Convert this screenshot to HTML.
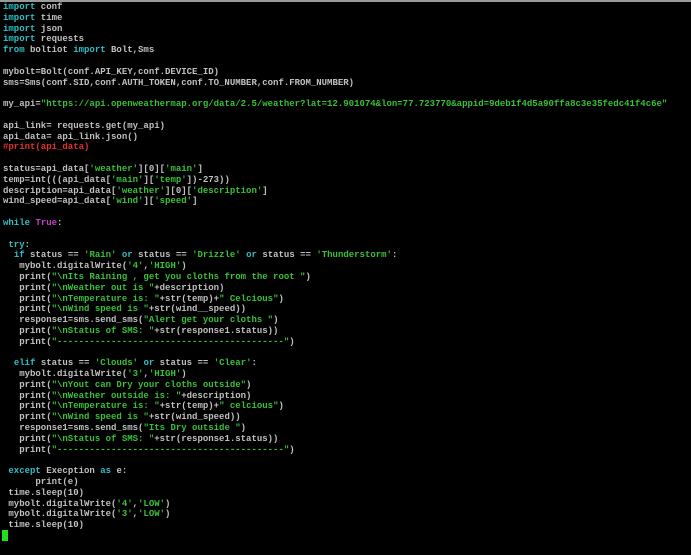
<!DOCTYPE html>
<html><head><meta charset="utf-8"><style>
html,body{margin:0;padding:0;background:#000;width:691px;height:555px;overflow:hidden}
.top{position:absolute;left:0;top:0;width:691px;height:2px;background:#9a9a9a}
pre{position:absolute;left:3px;top:2px;margin:0;font-family:"Liberation Mono",monospace;font-size:9px;line-height:10.79px;color:#c0c0c0;font-weight:bold;white-space:pre}
.k{color:#2ebfc4}.s{color:#38c038}.m{color:#c840c8}.c{color:#e03030}
.cur{position:absolute;left:2px;top:530px;width:6px;height:11px;background:#1ee01e}
</style></head><body><div class="top"></div>
<pre><span class="k">import</span> conf
<span class="k">import</span> time
<span class="k">import</span> json
<span class="k">import</span> requests
<span class="k">from</span> boltiot <span class="k">import</span> Bolt,Sms

mybolt=Bolt(conf.API_KEY,conf.DEVICE_ID)
sms=Sms(conf.SID,conf.AUTH_TOKEN,conf.TO_NUMBER,conf.FROM_NUMBER)

my_api=<span class="s">"https://api.openweathermap.org/data/2.5/weather?lat=12.901074&amp;lon=77.723770&amp;appid=9deb1f4d5a90ffa8c3e35fedc41f4c6e"</span>

api_link= requests.get(my_api)
api_data= api_link.json()
<span class="c">#print(api_data)</span>

status=api_data[<span class="s">'weather'</span>][0][<span class="s">'main'</span>]
temp=int(((api_data[<span class="s">'main'</span>][<span class="s">'temp'</span>])-273))
description=api_data[<span class="s">'weather'</span>][0][<span class="s">'description'</span>]
wind_speed=api_data[<span class="s">'wind'</span>][<span class="s">'speed'</span>]

<span class="k">while</span> <span class="m">True</span>:

 <span class="k">try</span>:
  <span class="k">if</span> status == <span class="s">'Rain'</span> <span class="k">or</span> status == <span class="s">'Drizzle'</span> <span class="k">or</span> status == <span class="s">'Thunderstorm'</span>:
   mybolt.digitalWrite(<span class="s">'4'</span>,<span class="s">'HIGH'</span>)
   print(<span class="s">"\nIts Raining , get you cloths from the root "</span>)
   print(<span class="s">"\nWeather out is "</span>+description)
   print(<span class="s">"\nTemperature is: "</span>+str(temp)+<span class="s">" Celcious"</span>)
   print(<span class="s">"\nWind speed is "</span>+str(wind__speed))
   response1=sms.send_sms(<span class="s">"Alert get your cloths "</span>)
   print(<span class="s">"\nStatus of SMS: "</span>+str(response1.status))
   print(<span class="s">"------------------------------------------"</span>)

  <span class="k">elif</span> status == <span class="s">'Clouds'</span> <span class="k">or</span> status == <span class="s">'Clear'</span>:
   mybolt.digitalWrite(<span class="s">'3'</span>,<span class="s">'HIGH'</span>)
   print(<span class="s">"\nYout can Dry your cloths outside"</span>)
   print(<span class="s">"\nWeather outside is: "</span>+description)
   print(<span class="s">"\nTemperature is: "</span>+str(temp)+<span class="s">" celcious"</span>)
   print(<span class="s">"\nWind speed is "</span>+str(wind_speed))
   response1=sms.send_sms(<span class="s">"Its Dry outside "</span>)
   print(<span class="s">"\nStatus of SMS: "</span>+str(response1.status))
   print(<span class="s">"------------------------------------------"</span>)

 <span class="k">except</span> Execption <span class="k">as</span> e:
      print(e)
 time.sleep(10)
 mybolt.digitalWrite(<span class="s">'4'</span>,<span class="s">'LOW'</span>)
 mybolt.digitalWrite(<span class="s">'3'</span>,<span class="s">'LOW'</span>)
 time.sleep(10)</pre>
<div class="cur"></div>
</body></html>
